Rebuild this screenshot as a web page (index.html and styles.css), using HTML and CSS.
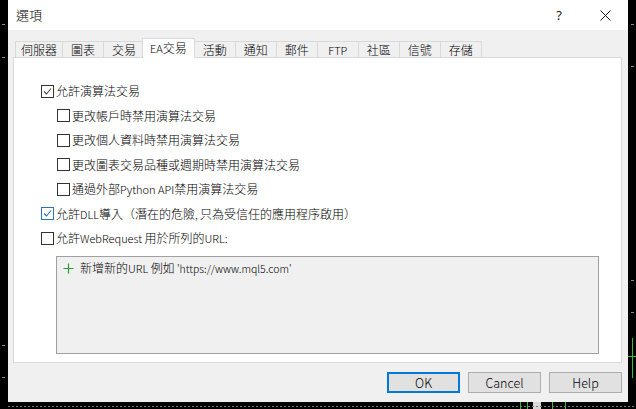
FILE: index.html
```html
<!DOCTYPE html>
<html lang="zh-Hant">
<head>
<meta charset="utf-8">
<title>選項</title>
<link rel="stylesheet" href="styles.css">
</head>
<body>
<div class="screen">
  <div class="chart">
    <span class="tick tick-l" style="top:24px"></span>
    <span class="tick tick-l" style="top:57px"></span>
    <span class="tick tick-l" style="top:345px"></span>
    <span class="tick tick-l" style="top:377px"></span>
    <span class="tick tick-r" style="top:24px"></span>
    <span class="tick tick-r" style="top:66px"></span>
    <span class="tick tick-r" style="top:280px"></span>
    <span class="tick tick-r" style="top:312px"></span>
    <span class="gline-v" style="left:632px;top:338px;height:40px"></span>
    <span class="gline-h" style="left:627px;top:356px;width:9px"></span>
    <span class="gline-v" style="left:520px;top:402px;height:7px"></span>
    <span class="gline-v" style="left:527px;top:402px;height:7px"></span>
    <span class="gline-v" style="left:552px;top:402px;height:7px"></span>
    <span class="gline-v" style="left:565px;top:402px;height:7px"></span>
    <span class="candle" style="left:533px;top:402px"></span>
    <span class="dotline"></span>
  </div>
  <div class="dialog">
    <header class="titlebar">
      <span class="title">選項</span>
      <div class="caption">
        <span class="cap-btn help">?</span>
        <span class="cap-btn">
          <svg width="11" height="11" viewBox="0 0 11 11"><path d="M0.5 0.5L10.5 10.5M10.5 0.5L0.5 10.5" stroke="#111" stroke-width="1"/></svg>
        </span>
      </div>
    </header>
    <div class="content">
      <nav class="tabs">
        <div class="tab">伺服器</div>
        <div class="tab">圖表</div>
        <div class="tab">交易</div>
        <div class="tab active"><span class="lat">EA</span>交易</div>
        <div class="tab">活動</div>
        <div class="tab">通知</div>
        <div class="tab">郵件</div>
        <div class="tab"><span class="lat">FTP</span></div>
        <div class="tab">社區</div>
        <div class="tab">信號</div>
        <div class="tab">存儲</div>
      </nav>
      <section class="panel">
        <div class="opt">
          <span class="cb"><svg viewBox="0 0 11 11" width="11" height="11"><path d="M2 5.5L4.5 8L9 2.5" fill="none" stroke="#444" stroke-width="1.1"/></svg></span>
          <span>允許演算法交易</span>
        </div>
        <div class="opt sub"><span class="cb"></span><span>更改帳戶時禁用演算法交易</span></div>
        <div class="opt sub"><span class="cb"></span><span>更改個人資料時禁用演算法交易</span></div>
        <div class="opt sub"><span class="cb"></span><span>更改圖表交易品種或週期時禁用演算法交易</span></div>
        <div class="opt sub"><span class="cb"></span><span>通過外部<span class="lat">Python API</span>禁用演算法交易</span></div>
        <div class="opt">
          <span class="cb focus"><svg viewBox="0 0 11 11" width="11" height="11"><path d="M2 5.5L4.5 8L9 2.5" fill="none" stroke="#2a6fc0" stroke-width="1.1"/></svg></span>
          <span>允許<span class="lat">DLL</span>導入（潛在的危險<span class="lat">, </span>只為受信任的應用程序啟用）</span>
        </div>
        <div class="opt"><span class="cb"></span><span>允許<span class="lat">WebRequest </span>用於所列的<span class="lat">URL:</span></span></div>
        <div class="urlbox">
          <div class="url-row">
            <svg class="plus" width="11" height="11" viewBox="0 0 11 11"><path d="M5.5 0.5V10.5M0.5 5.5H10.5" stroke="#2f9a32" stroke-width="1.2"/></svg>
            <span>新增新的<span class="lat">URL </span>例如<span class="lat url"> 'https://www.mql5.com'</span></span>
          </div>
        </div>
      </section>
      <footer class="buttons">
        <button class="btn default">OK</button>
        <button class="btn">Cancel</button>
        <button class="btn">Help</button>
      </footer>
    </div>
  </div>
</div>
</body>
</html>
```
FILE: styles.css
```css
* { box-sizing: border-box; }

html, body {
  margin: 0;
  padding: 0;
  background: #000;
}

body {
  font-family: "Noto Sans CJK TC", sans-serif;
  font-size: 12px;
  font-weight: 300;
  color: #000;
}

.lat {
  font-size: 11px;
}

.lat.url {
  font-size: 10.5px;
}

.screen {
  position: relative;
  width: 636px;
  height: 409px;
  background: #000;
  overflow: hidden;
}

.chart {
  position: absolute;
  inset: 0;
}

.tick {
  position: absolute;
  width: 3px;
  height: 1px;
  background: #8a8a8a;
}
.tick-l { left: 2px; }
.tick-r { left: 631px; }

.gline-v {
  position: absolute;
  width: 1px;
  background: #2fbf3a;
}
.gline-h {
  position: absolute;
  height: 1px;
  background: #2fbf3a;
}
.candle {
  position: absolute;
  width: 8px;
  height: 7px;
  background: #d8d8d8;
}
.dotline {
  position: absolute;
  left: 8px;
  right: 0;
  top: 406px;
  height: 1px;
  background: repeating-linear-gradient(90deg, #7a7a7a 0 2px, transparent 2px 4px);
}

.dialog {
  position: relative;
  margin-left: 8px;
  width: 620px;
  height: 402px;
  background: #f0f0f0;
  display: flex;
  flex-direction: column;
}

.titlebar {
  height: 30px;
  background: #fff;
  display: flex;
  align-items: center;
  justify-content: space-between;
}

.title {
  padding-left: 8px;
  font-size: 13px;
  line-height: 30px;
}

.caption {
  display: flex;
  height: 30px;
}

.cap-btn {
  width: 46px;
  height: 30px;
  display: flex;
  align-items: center;
  justify-content: center;
}

.help {
  font-family: "Noto Sans", sans-serif;
  font-weight: 400;
  font-size: 13px;
  color: #222;
}

.content {
  flex: 1;
  padding: 8px 6px 0 5px;
  display: flex;
  flex-direction: column;
}

.tabs {
  position: relative;
  z-index: 1;
  height: 19px;
  display: flex;
  align-items: flex-end;
  padding-left: 2px;
}

.tab {
  height: 16px;
  min-width: 42px;
  padding: 0 5px;
  margin-right: -1px;
  border: 1px solid #d9d9d9;
  border-bottom: none;
  background: #f0f0f0;
  line-height: 15px;
  text-align: center;
  white-space: nowrap;
}

.tab.active {
  height: 20px;
  margin: 0 -1px -1px -2px;
  padding: 0 7px;
  background: #fff;
  line-height: 18px;
  position: relative;
  z-index: 2;
}

.panel {
  height: 306px;
  border: 1px solid #d9d9d9;
  background: #fff;
  padding: 21px 0 0 27px;
}

.opt {
  height: 24.5px;
  display: flex;
  align-items: center;
  gap: 2px;
  white-space: nowrap;
  line-height: 16px;
}

.opt.sub {
  padding-left: 16px;
}

.cb {
  width: 13px;
  height: 13px;
  border: 1px solid #333;
  background: #fff;
  display: flex;
  align-items: center;
  justify-content: center;
  flex: none;
}

.cb.focus {
  border-color: #2a6fc0;
}

.urlbox {
  margin: 5px 0 0 15px;
  width: 543px;
  height: 98px;
  border: 1px solid #a0a0a0;
  background: #f0f0f0;
  padding: 5px 0 0 6px;
}

.url-row {
  display: flex;
  align-items: center;
  gap: 6px;
  height: 14px;
  line-height: 14px;
}

.plus {
  flex: none;
}

.buttons {
  display: flex;
  justify-content: flex-end;
  gap: 8px;
  padding-top: 9px;
}

.btn {
  width: 73px;
  height: 21px;
  border: 1px solid #adadad;
  background: #e1e1e1;
  font-family: "Noto Sans CJK TC", sans-serif;
  font-weight: 300;
  font-size: 12.5px;
  color: #000;
  padding: 0;
  line-height: 19px;
}

.btn.default {
  border: 2px solid #0078d7;
  line-height: 17px;
}
```
